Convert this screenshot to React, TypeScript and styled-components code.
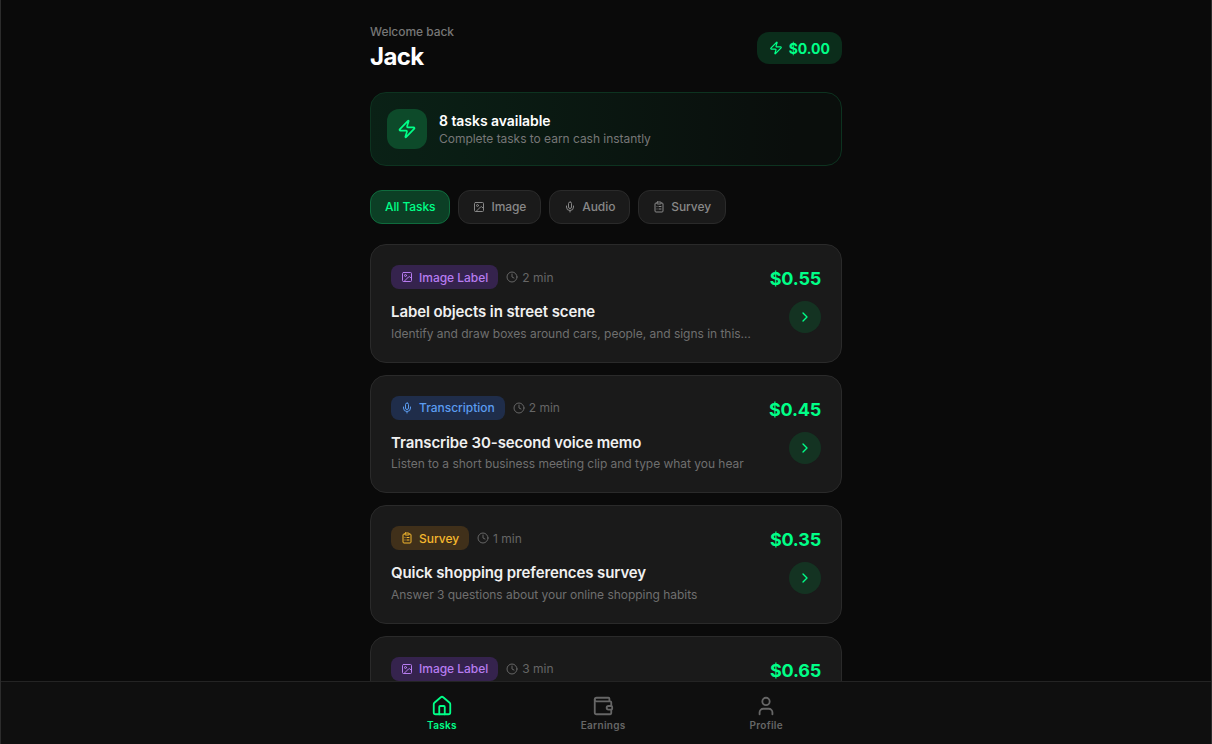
import { createGlobalStyle, styled } from "styled-components";
import {
  ChevronRight,
  ClipboardList,
  Clock,
  House,
  Image,
  Mic,
  User,
  Wallet,
  Zap,
} from "lucide-react";

const GlobalStyle = createGlobalStyle`
  html, body {
    margin: 0;
    height: 100%;
    overflow: hidden;
    background: #0a0a0a;
    font-family: Inter, "Liberation Sans", sans-serif;
    -webkit-font-smoothing: antialiased;
  }
  #root {
    height: 100%;
  }
`;

const Screen = styled.div`
  height: 100vh;
  overflow: hidden;
  box-sizing: border-box;
  border-left: 1px solid #2c2c2c;
  border-right: 1px solid #2c2c2c;
`;

const Main = styled.main`
  width: 472px;
  margin: 0 auto;
  padding-top: 24px;
`;

const Header = styled.header`
  display: flex;
  justify-content: space-between;
  align-items: center;
  margin-bottom: 21px;
`;

const Welcome = styled.div`
  font-size: 12px;
  font-weight: 500;
  line-height: 15px;
  letter-spacing: -0.05px;
  color: #777;
`;

const Name = styled.h1`
  margin: 3px 0 0;
  font-size: 24px;
  line-height: 29px;
  font-weight: 700;
  letter-spacing: -0.6px;
  color: #fff;
`;

const Balance = styled.div`
  display: flex;
  align-items: center;
  gap: 6px;
  height: 32px;
  margin-top: 1px;
  padding: 0 12px;
  border-radius: 12px;
  background: #0b2d1b;
  color: #00ff88;
  font-size: 14px;
  font-weight: 700;
`;

const Banner = styled.section`
  display: flex;
  align-items: center;
  gap: 12px;
  height: 74px;
  box-sizing: border-box;
  padding: 0 16px;
  border: 1px solid #0d3320;
  border-radius: 16px;
  background: linear-gradient(90deg, #0a2116 0%, #0a0e0c 90%);
  margin-bottom: 24px;
`;

const BannerIcon = styled.div`
  display: flex;
  align-items: center;
  justify-content: center;
  width: 40px;
  height: 40px;
  border-radius: 12px;
  background: #0d4a2a;
  color: #00ff88;
`;

const BannerCopy = styled.div`
  margin-top: 2px;
`;

const BannerTitle = styled.div`
  font-size: 14px;
  line-height: 18px;
  font-weight: 600;
  letter-spacing: -0.05px;
  color: #fff;
`;

const BannerText = styled.div`
  font-size: 12px;
  line-height: 18px;
  letter-spacing: -0.03px;
  color: #777;
`;

const Filters = styled.nav`
  display: flex;
  gap: 8px;
  margin-bottom: 20px;
`;

const Filter = styled.button<{ $active?: boolean }>`
  display: flex;
  align-items: center;
  gap: 6px;
  height: 34px;
  padding: 0 14px 1px;
  border-radius: 12px;
  border: 1px solid ${(p) => (p.$active ? "#0f6b3d" : "#2a2a2a")};
  background: ${(p) => (p.$active ? "#0c3f25" : "#1a1a1a")};
  color: ${(p) => (p.$active ? "#00ff88" : "#888")};
  font-family: inherit;
  font-size: 12px;
  font-weight: 500;
  letter-spacing: -0.08px;
`;

const TaskList = styled.div`
  display: flex;
  flex-direction: column;
  gap: 12px;
`;

const Card = styled.article`
  display: flex;
  justify-content: space-between;
  box-sizing: border-box;
  height: 118.5px;
  padding: 20px;
  border: 1px solid #2a2a2a;
  border-radius: 16px;
  background: #1a1a1a;
`;

const CardBody = styled.div`
  min-width: 0;
  flex: 1;
`;

const Meta = styled.div`
  display: flex;
  align-items: center;
  gap: 8px;
  margin-bottom: 13px;
`;

const Badge = styled.span<{ $bg: string; $fg: string }>`
  display: flex;
  align-items: center;
  gap: 6px;
  height: 24px;
  padding: 0 10px;
  border-radius: 8px;
  background: ${(p) => p.$bg};
  color: ${(p) => p.$fg};
  font-size: 12px;
  font-weight: 500;
  letter-spacing: -0.02px;
`;

const Time = styled.span`
  display: flex;
  align-items: center;
  gap: 4px;
  font-size: 12px;
  color: #666;
`;

const Title = styled.h3`
  margin: 0 0 2.5px;
  font-size: 15px;
  line-height: 20px;
  font-weight: 600;
  letter-spacing: -0.1px;
  color: #f0f0f0;
`;

const Description = styled.p`
  margin: 0;
  width: 360px;
  font-size: 12px;
  line-height: 18px;
  letter-spacing: -0.03px;
  color: #6f6f6f;
  white-space: nowrap;
  overflow: hidden;
  text-overflow: ellipsis;
`;

const CardSide = styled.div`
  display: flex;
  flex-direction: column;
  align-items: flex-end;
  gap: 10px;
`;

const Price = styled.div`
  margin-top: 2px;
  font-size: 18px;
  line-height: 24px;
  font-weight: 700;
  letter-spacing: -0.2px;
  color: #00ff88;
`;

const Go = styled.div`
  display: flex;
  align-items: center;
  justify-content: center;
  width: 32px;
  height: 32px;
  border-radius: 50%;
  background: #143322;
  color: #00ff88;
`;

const BottomBar = styled.footer`
  position: fixed;
  left: 1px;
  right: 1px;
  bottom: 0;
  height: 63px;
  box-sizing: border-box;
  border-top: 1px solid #242424;
  background: #0f0f0f;
`;

const BottomInner = styled.div`
  display: flex;
  justify-content: space-around;
  align-items: center;
  max-width: 480px;
  height: 100%;
  margin: 0 auto;
  padding-right: 2px;
`;

const NavItem = styled.div<{ $active?: boolean }>`
  display: flex;
  flex-direction: column;
  align-items: center;
  gap: 2px;
  color: ${(p) => (p.$active ? "#00ff88" : "#666")};
  font-size: 10px;
  line-height: 12px;
  font-weight: 600;
  letter-spacing: 0.3px;
`;

const kinds = {
  image: { label: "Image Label", bg: "#35234d", fg: "#b77cf0", Icon: Image },
  audio: { label: "Transcription", bg: "#1f2d4a", fg: "#5b9cf0", Icon: Mic },
  survey: { label: "Survey", bg: "#40301a", fg: "#f5b82e", Icon: ClipboardList },
};

type Task = {
  kind: keyof typeof kinds;
  time: string;
  price: string;
  title?: string;
  text?: string;
};

const tasks: Task[] = [
  {
    kind: "image",
    time: "2 min",
    price: "$0.55",
    title: "Label objects in street scene",
    text: "Identify and draw boxes around cars, people, and signs in this image",
  },
  {
    kind: "audio",
    time: "2 min",
    price: "$0.45",
    title: "Transcribe 30-second voice memo",
    text: "Listen to a short business meeting clip and type what you hear",
  },
  {
    kind: "survey",
    time: "1 min",
    price: "$0.35",
    title: "Quick shopping preferences survey",
    text: "Answer 3 questions about your online shopping habits",
  },
  // the rest of this card is behind the bottom bar
  { kind: "image", time: "3 min", price: "$0.65" },
];

function TaskCard({ task }: { task: Task }) {
  const kind = kinds[task.kind];
  return (
    <Card>
      <CardBody>
        <Meta>
          <Badge $bg={kind.bg} $fg={kind.fg}>
            <kind.Icon size={12} />
            {kind.label}
          </Badge>
          <Time>
            <Clock size={12} />
            {task.time}
          </Time>
        </Meta>
        {task.title && <Title>{task.title}</Title>}
        {task.text && <Description>{task.text}</Description>}
      </CardBody>
      <CardSide>
        <Price>{task.price}</Price>
        <Go>
          <ChevronRight size={16} />
        </Go>
      </CardSide>
    </Card>
  );
}

export default function App() {
  return (
    <Screen>
      <GlobalStyle />
      <Main>
        <Header>
          <div>
            <Welcome>Welcome back</Welcome>
            <Name>Jack</Name>
          </div>
          <Balance>
            <Zap size={14} />
            $0.00
          </Balance>
        </Header>
        <Banner>
          <BannerIcon>
            <Zap size={20} />
          </BannerIcon>
          <BannerCopy>
            <BannerTitle>8 tasks available</BannerTitle>
            <BannerText>Complete tasks to earn cash instantly</BannerText>
          </BannerCopy>
        </Banner>
        <Filters>
          <Filter $active>All Tasks</Filter>
          <Filter>
            <Image size={12} />
            Image
          </Filter>
          <Filter>
            <Mic size={12} />
            Audio
          </Filter>
          <Filter>
            <ClipboardList size={12} />
            Survey
          </Filter>
        </Filters>
        <TaskList>
          {tasks.map((task, i) => (
            <TaskCard key={i} task={task} />
          ))}
        </TaskList>
      </Main>
      <BottomBar>
        <BottomInner>
          <NavItem $active>
            <House size={22} />
            Tasks
          </NavItem>
          <NavItem>
            <Wallet size={22} />
            Earnings
          </NavItem>
          <NavItem>
            <User size={22} />
            Profile
          </NavItem>
        </BottomInner>
      </BottomBar>
    </Screen>
  );
}
